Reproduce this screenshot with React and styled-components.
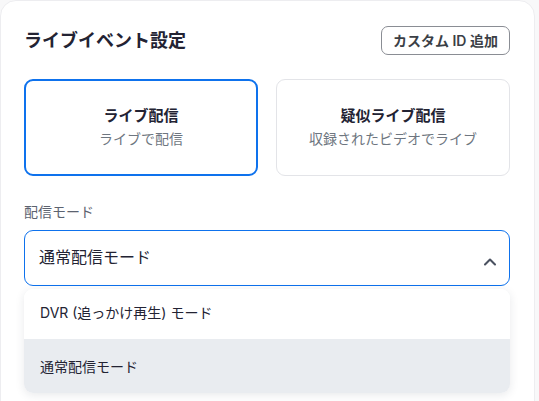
import React from 'react';
import styled, {createGlobalStyle} from 'styled-components';
import {ChevronUp} from 'lucide-react';

const GlobalStyle = createGlobalStyle`
    body {
        margin: 0;
        background: #f8f8f9;
        font-family: "Inter", "Noto Sans CJK JP", sans-serif;
    }
`;

const Panel = styled.div`
    box-sizing: border-box;
    width: 535px;
    height: 420px;
    background: #fff;
    border: 1px solid #ededf0;
    border-radius: 16px;
    padding: 24px 24px 0 23px;
`;

const Header = styled.div`
    display: flex;
    align-items: center;
    justify-content: space-between;
    height: 30px;
`;

const Title = styled.h2`
    margin: 0 0 2px;
    font-size: 18px;
    font-weight: 700;
    color: #232333;
`;

const OutlineButton = styled.button`
    box-sizing: border-box;
    height: 29px;
    padding: 0 11px;
    background: #fff;
    border: 1px solid #8a8d94;
    border-radius: 7px;
    font-family: inherit;
    font-size: 14px;
    font-weight: 600;
    color: #3b3f46;
`;

const ModeRow = styled.div`
    display: grid;
    grid-template-columns: 1fr 1fr;
    gap: 18px;
    margin-top: 24px;
`;

const ModeCard = styled.div`
    box-sizing: border-box;
    height: 97px;
    display: flex;
    flex-direction: column;
    align-items: center;
    justify-content: center;
    gap: 3px;
    padding-bottom: 4px;
    border-radius: 9px;
    border: ${p => p.$active ? '2px solid #0e72ed' : '1px solid #e3e4e8'};
`;

const ModeName = styled.div`
    font-size: 15px;
    font-weight: 700;
    color: #232333;
`;

const ModeDesc = styled.div`
    font-size: 14px;
    color: #6e7680;
`;

const Label = styled.div`
    margin-top: 25px;
    font-size: 14px;
    color: #5c6370;
`;

const Field = styled.div`
    position: relative;
    margin-top: 9px;
`;

const SelectBox = styled.div`
    box-sizing: border-box;
    height: 56px;
    display: flex;
    align-items: center;
    justify-content: space-between;
    padding: 0 9px 4px 14px;
    border: 1px solid #0e72ed;
    border-radius: 9px;
    font-size: 16px;
    color: #232333;
`;

const Chevron = styled(ChevronUp)`
    margin-top: 12px;
    color: #4a5160;
`;

const Menu = styled.div`
    position: absolute;
    left: 0;
    right: 0;
    top: 59px;
    background: #fff;
    border-radius: 9px;
    overflow: hidden;
    box-shadow: 0 2px 10px rgba(30, 40, 60, 0.1);
`;

const Option = styled.div`
    box-sizing: border-box;
    height: ${p => p.$h}px;
    display: flex;
    align-items: center;
    padding: 0 0 ${p => p.$pb || 0}px 16px;
    font-size: 14px;
    color: #232333;
    background: ${p => p.$selected ? '#e9ecf0' : '#fff'};
`;

const App = () => (
    <>
        <GlobalStyle/>
        <Panel>
            <Header>
                <Title>ライブイベント設定</Title>
                <OutlineButton>カスタム ID 追加</OutlineButton>
            </Header>
            <ModeRow>
                <ModeCard $active>
                    <ModeName>ライブ配信</ModeName>
                    <ModeDesc>ライブで配信</ModeDesc>
                </ModeCard>
                <ModeCard>
                    <ModeName>疑似ライブ配信</ModeName>
                    <ModeDesc>収録されたビデオでライブ</ModeDesc>
                </ModeCard>
            </ModeRow>
            <Label>配信モード</Label>
            <Field>
                <SelectBox>
                    通常配信モード
                    <Chevron size={20} strokeWidth={2.5}/>
                </SelectBox>
                <Menu>
                    <Option $h={50} $pb={4}>DVR (追っかけ再生) モード</Option>
                    <Option $h={54} $selected>通常配信モード</Option>
                </Menu>
            </Field>
        </Panel>
    </>
);

export default App;
